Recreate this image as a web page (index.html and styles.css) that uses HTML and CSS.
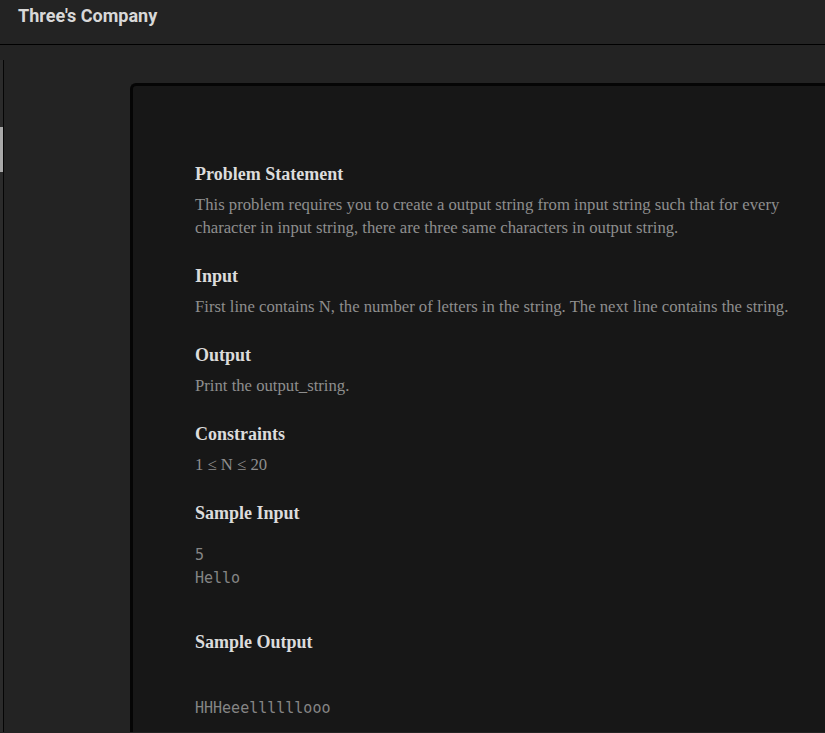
FILE: index.html
```html
<!DOCTYPE html>
<html lang="en">
<head>
<meta charset="utf-8">
<title>Three's Company</title>
<link rel="stylesheet" href="styles.css">
</head>
<body>
<header class="topbar">
  <h1 class="title">Three's Company</h1>
</header>
<div class="layout">
  <aside class="rail">
    <div class="rail-track"></div>
    <div class="rail-thumb"></div>
  </aside>
  <main class="main">
    <section class="card">
      <h2 class="heading">Problem Statement</h2>
      <p class="text">This problem requires you to create a output string from input string such that for every character in input string, there are three same characters in output string.</p>
      <h2 class="heading">Input</h2>
      <p class="text">First line contains N, the number of letters in the string. The next line contains the string.</p>
      <h2 class="heading">Output</h2>
      <p class="text">Print the output_string.</p>
      <h2 class="heading">Constraints</h2>
      <p class="text">1 &le; N &le; 20</p>
      <h2 class="heading">Sample Input</h2>
      <pre class="code code-in">5
Hello</pre>
      <h2 class="heading heading-out">Sample Output</h2>
      <pre class="code code-out">HHHeeellllllooo</pre>
    </section>
  </main>
</div>
</body>
</html>
```
FILE: styles.css
```css
html, body {
  margin: 0;
  padding: 0;
  height: 100%;
  overflow: hidden;
  background: #232323;
}

.topbar {
  height: 45px;
  box-sizing: border-box;
  padding: 4px 18px 0;
  background: #232323;
  border-bottom: 1px solid #000;
}

.title {
  margin: 0;
  font-family: Roboto, "Liberation Sans", sans-serif;
  font-weight: 700;
  font-size: 18px;
  line-height: 24px;
  color: #d8d8d8;
}

.layout {
  display: flex;
  height: calc(100% - 46px);
}

.rail {
  width: 3px;
  margin-top: 15px;
  border-right: 1px solid #050505;
  background: #2b2b2b;
  display: flex;
  flex-direction: column;
}

.rail-track {
  height: 67px;
  flex: none;
}

.rail-thumb {
  height: 45px;
  width: 3px;
  background: #a9a9a9;
  flex: none;
}

.main {
  flex: 1;
  padding: 38px 0 0 126px;
  min-width: 0;
}

.card {
  background: #171717;
  border: 3px solid #050505;
  border-right: none;
  border-bottom: none;
  border-top-left-radius: 6px;
  padding: 77px 0 40px 62px;
  height: 100%;
  box-sizing: border-box;
}

.heading {
  margin: 0 0 8px;
  font-family: "Liberation Serif", "Times New Roman", serif;
  font-weight: 700;
  font-size: 18px;
  line-height: 22px;
  color: #dcdcdc;
}

.text {
  margin: 0 0 26px;
  font-family: "Liberation Serif", "Times New Roman", serif;
  font-size: 16.7px;
  line-height: 23px;
  color: #8e8e8e;
}

.code {
  margin: 0;
  font-family: "DejaVu Sans Mono", "Liberation Mono", monospace;
  font-size: 15px;
  line-height: 23px;
  color: #858585;
}

.code-in {
  margin-top: 20px;
  margin-bottom: 41px;
}

.heading-out {
  margin-bottom: 0;
}

.code-out {
  margin-top: 44px;
}
```
